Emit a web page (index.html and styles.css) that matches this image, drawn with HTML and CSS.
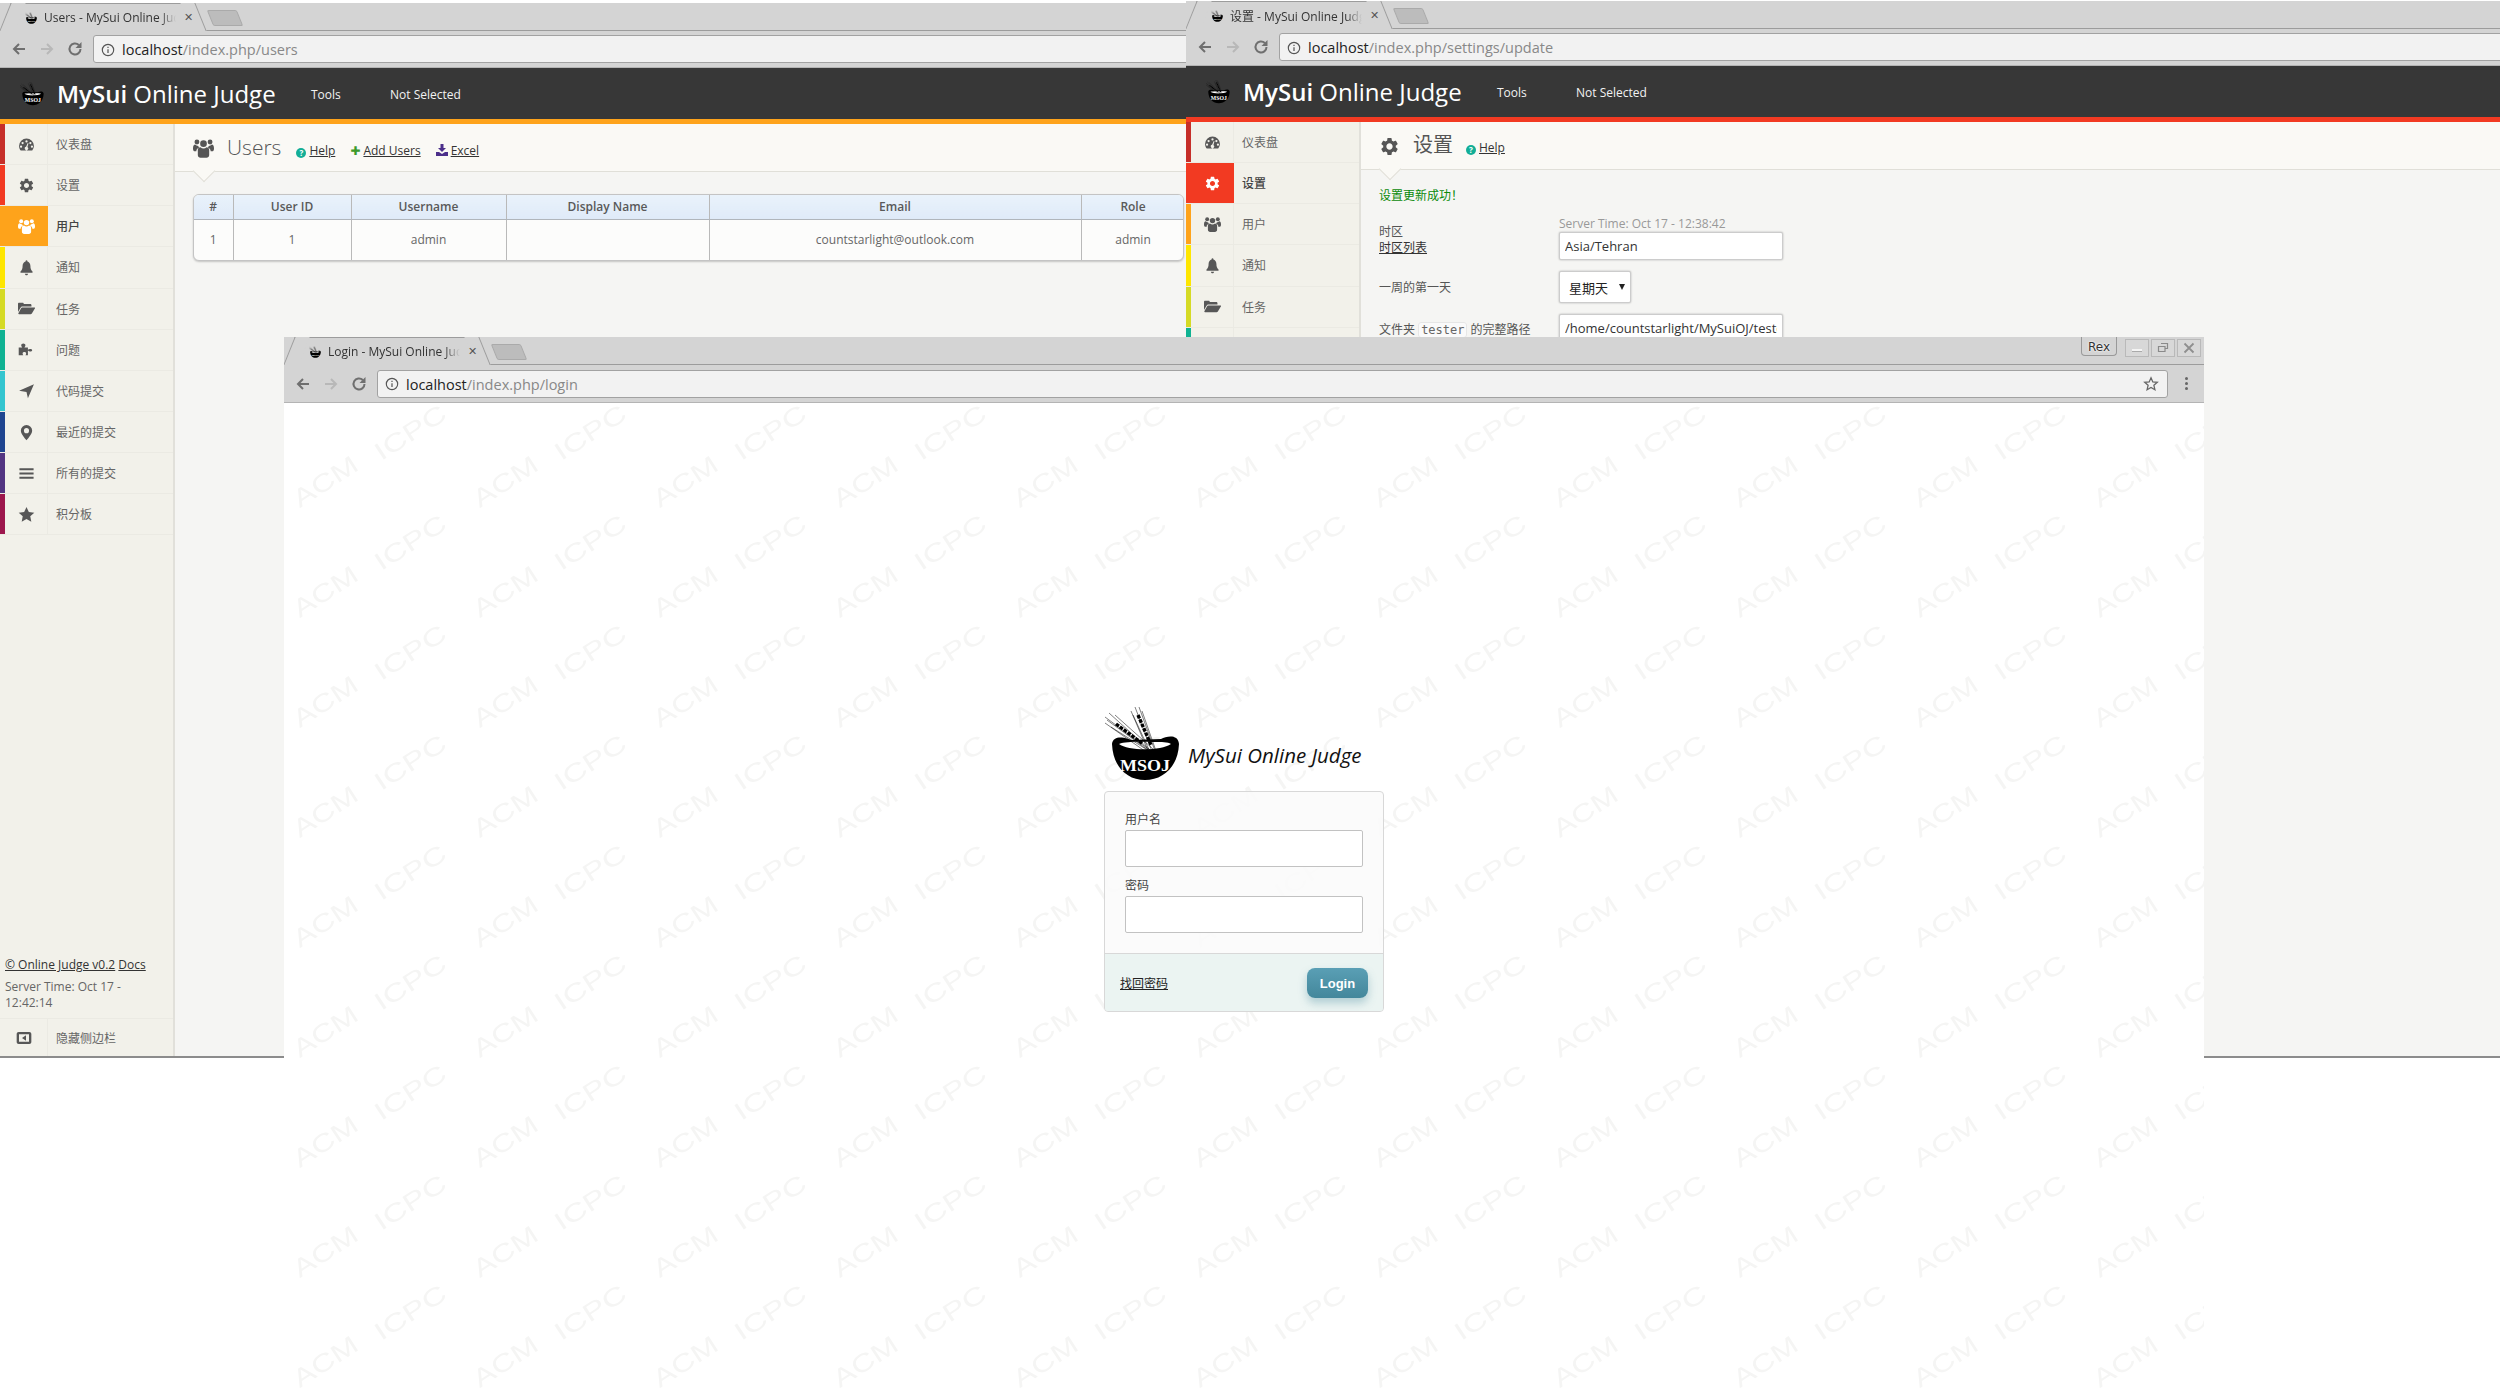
FILE: index.html
```html
<!DOCTYPE html>
<html lang="zh-CN">
<head>
    <meta charset="UTF-8">
    <meta name="viewport" content="width=device-width, initial-scale=1.0">
    <title>MySui Online Judge</title>
    <link rel="stylesheet" href="styles.css">
</head>
<body>
    <!-- shared icons -->
    <svg class="icon-defs" width="0" height="0">
        <symbol id="i-logo" viewBox="0 0 75 75">
            <path d="M7 37C8 27 22 31 26 33l30-1c6-3 17-5 18 5C73 60 58 73 40 73S8 60 7 37z" fill="#000"/>
            <path class="logo-lens" d="M14 37c9 7 42 7 52 0-3-2-10-2-16-2-12 0-28-1-36 2z"/>
            <g fill="none" stroke="#000" stroke-width="0.5">
                <path d="M0 10 50 47M4 6 46 44M0 16 44 47M10 8 48 42M2 13 47 46M6 20 44 44"/>
                <path d="M30 0 48 47M34 0 50 44M26 4 44 46M37 4 51 44M28 8 46 47"/>
            </g>
            <path d="M11 17 38 37" fill="none" stroke="#000" stroke-width="3.400" stroke-dasharray="3.600 1.200"/>
            <path d="M33 8 46 38" fill="none" stroke="#000" stroke-width="3.400" stroke-dasharray="3.600 1.200"/>
            <text x="40" y="64" text-anchor="middle" textLength="50" lengthAdjust="spacingAndGlyphs" font-family="Liberation Serif" font-weight="700" font-size="17" fill="#fff">MSOJ</text>
        </symbol>
        <symbol id="i-dash" viewBox="0 0 24 24">
            <path fill-rule="evenodd" d="M12 3.5A10.5 10.5 0 0 0 1.5 14c0 2.500.9 4.800 2.400 6.500h16.200A10.400 10.400 0 0 0 22.500 14 10.500 10.500 0 0 0 12 3.500zM12 6a1.600 1.600 0 1 1 0 3.200A1.600 1.600 0 0 1 12 6zM6.500 8.300a1.600 1.600 0 1 1 0 3.200 1.600 1.600 0 0 1 0-3.200zM17.500 8.300a1.600 1.600 0 1 1 0 3.200 1.600 1.600 0 0 1 0-3.200zM4.300 13.500a1.600 1.600 0 1 1 0 3.200 1.600 1.600 0 0 1 0-3.200zM19.700 13.500a1.600 1.600 0 1 1 0 3.200 1.600 1.600 0 0 1 0-3.200zM13.800 10l1 .4-1.500 5.200a2.400 2.400 0 1 1-1.900-.3z"/>
        </symbol>
        <symbol id="i-cog" viewBox="0 0 24 24">
            <path d="M19.140 12.940c.04-.3.06-.61.06-.94 0-.32-.02-.64-.07-.94l2.030-1.580a.49.49 0 0 0 .12-.61l-1.920-3.320a.488.488 0 0 0-.59-.22l-2.390.96c-.5-.38-1.030-.7-1.620-.94l-.36-2.540a.484.484 0 0 0-.48-.41h-3.840c-.24 0-.43.17-.47.41l-.36 2.540c-.59.24-1.130.57-1.620.94l-2.390-.96c-.22-.08-.47 0-.59.22L2.740 8.870c-.12.21-.08.47.12.61l2.030 1.580c-.05.3-.09.63-.09.94s.02.64.07.94l-2.030 1.580a.49.49 0 0 0-.12.61l1.920 3.320c.12.22.37.29.59.22l2.390-.96c.5.38 1.030.7 1.620.94l.36 2.540c.05.24.24.41.48.41h3.840c.24 0 .44-.17.47-.41l.36-2.540c.59-.24 1.130-.56 1.620-.94l2.390.96c.22.08.47 0 .59-.22l1.920-3.320c.12-.22.07-.47-.12-.61l-2.010-1.580zM12 15.600c-1.980 0-3.600-1.620-3.600-3.600s1.620-3.600 3.600-3.600 3.600 1.620 3.600 3.600-1.620 3.600-3.600 3.600z"/>
        </symbol>
        <symbol id="i-users" viewBox="0 0 24 24">
            <circle cx="12" cy="6.500" r="3.800"/>
            <circle cx="4.500" cy="4.500" r="2.800"/>
            <circle cx="19.500" cy="4.500" r="2.800"/>
            <path d="M5.500 13.500c0-2 1.500-3 3-3 1 1 2.200 1.500 3.500 1.500s2.500-.5 3.500-1.500c1.500 0 3 1 3 3v6c0 2-1.500 3-3 3h-7c-1.500 0-3-1-3-3z"/>
            <path d="M0 12c0-3 1-4.500 2.500-4.500C3.500 8.500 4.500 9 6 9c.3 1 .6 1.500 1 2-2 .5-3.200 2-3.200 4H1.500C.5 15 0 13.500 0 12zM24 12c0-3-1-4.500-2.500-4.500C20.500 8.500 19.500 9 18 9c-.3 1-.6 1.500-1 2 2 .5 3.200 2 3.200 4h2.300c1 0 1.500-1.500 1.500-3z"/>
        </symbol>
        <symbol id="i-bell" viewBox="0 0 24 24">
            <path d="M12 23c1.300 0 2.300-1 2.300-2.200H9.700C9.700 22 10.700 23 12 23zm8.500-5.500c-2-1.800-3-4-3-8 0-3-2-5.200-4.200-5.800V3a1.300 1.300 0 0 0-2.600 0v.7C8.500 4.300 6.500 6.500 6.500 9.500c0 4-1 6.200-3 8v2h17z"/>
        </symbol>
        <symbol id="i-folder" viewBox="0 0 24 24">
            <path d="M0 5.500C0 4.500.7 4 1.500 4h5c1 0 1.500.6 1.700 1.500h9c1 0 1.800.7 1.800 1.700V9H6.500C5 9 4.300 9.600 3.800 10.500L0 17z"/>
            <path d="M6 10.500h17c1 0 1.300.7.800 1.500l-3.800 6.500c-.4.8-1 1.500-2.200 1.500H1.500c-1 0-1.300-.7-.8-1.500l3.500-6.500c.4-.8 1-1.500 1.800-1.500z"/>
        </symbol>
        <symbol id="i-puzzle" viewBox="0 0 24 24">
            <path d="M1 9h5C5 8 4.500 7 4.500 6 4.500 4.500 6 3.500 7.500 3.500S10.500 4.500 10.500 6c0 1-.5 2-1.500 3h5v3.500c1-.8 1.700-1.300 3-1.300 1.800 0 3 .8 3 1.800s-1.200 1.800-3 1.800c-1.300 0-2-.5-3-1.300V20h-3.500c.5-.8 1-1.500 1-2.500 0-1.200-1-2-2.500-2s-2.500.8-2.500 2c0 1 .5 1.700 1 2.500H1z"/>
        </symbol>
        <symbol id="i-arrow" viewBox="0 0 24 24">
            <path d="M1.500 12.500 22.500 3l-8.500 20-2-9z"/>
        </symbol>
        <symbol id="i-pin" viewBox="0 0 24 24">
            <path fill-rule="evenodd" d="M12 1.500a8 8 0 0 0-8 8c0 5 8 13.500 8 13.500s8-8.500 8-13.500a8 8 0 0 0-8-8zm0 11.500a3.600 3.600 0 1 1 0-7.200 3.600 3.600 0 0 1 0 7.200z"/>
        </symbol>
        <symbol id="i-bars" viewBox="0 0 24 24">
            <path d="M2 4.500h20v3H2zM2 10.500h20v3H2zM2 16.500h20v3H2z"/>
        </symbol>
        <symbol id="i-star" viewBox="0 0 24 24">
            <path d="M12 1.500l3.300 7 7.700.9-5.700 5.200 1.500 7.600L12 18.400l-6.800 3.800 1.500-7.600L1 9.400l7.700-.9z"/>
        </symbol>
        <symbol id="i-collapse" viewBox="0 0 24 24">
            <path fill-rule="evenodd" d="M4 3h16c1.700 0 3 1.300 3 3v12c0 1.700-1.300 3-3 3H4c-1.700 0-3-1.300-3-3V6c0-1.700 1.300-3 3-3zm.5 3.500v11h15v-11zM15 8v8l-6-4z"/>
        </symbol>
    </svg>

    <div class="desktop">

        <!-- users window -->
        <section class="window win-users">
            <div class="tabstrip">
                <div class="tab">
                    <svg class="favicon"><use href="#i-logo"/></svg>
                    <span class="tab-title">Users - MySui Online Judge</span>
                    <span class="tab-close">✕</span>
                </div>
                <div class="new-tab"></div>
            </div>
            <div class="toolbar">
                <svg class="nav-btn" viewBox="0 0 16 16"><path d="M14 8H3M8 3 3 8l5 5" fill="none" stroke="#6f6f6f" stroke-width="2"/></svg>
                <svg class="nav-btn" viewBox="0 0 16 16"><path d="M2 8h11M8 3l5 5-5 5" fill="none" stroke="#b8b8b8" stroke-width="2"/></svg>
                <svg class="nav-btn" viewBox="0 0 16 16"><path d="M13.500 8A5.500 5.500 0 1 1 11.800 4" fill="none" stroke="#6f6f6f" stroke-width="2"/><path d="M14.500 1v6h-6z" fill="#6f6f6f"/></svg>
                <div class="address address-open">
                    <svg class="info" viewBox="0 0 16 16"><circle cx="8" cy="8" r="6.500" fill="none" stroke="#555" stroke-width="1.300"/><path d="M7.300 7h1.400v4.500H7.300zM7.300 4.300h1.400v1.400H7.300z" fill="#555"/></svg>
                    <span class="host">localhost</span><span class="path">/index.php/users</span>
                </div>
            </div>
            <header class="app-header">
                <svg class="app-logo"><use href="#i-logo"/></svg>
                <div class="app-title"><b>MySui</b> Online Judge</div>
                <a class="app-link link-tools">Tools</a>
                <a class="app-link">Not Selected</a>
            </header>
            <div class="accent accent-orange"></div>
            <div class="app-body">
                <aside class="sidebar">
                    <a class="nav-item c1"><span class="nav-icon"><svg><use href="#i-dash"/></svg></span><span class="nav-label">仪表盘</span></a>
                    <a class="nav-item c2"><span class="nav-icon"><svg><use href="#i-cog"/></svg></span><span class="nav-label">设置</span></a>
                    <a class="nav-item c3 active"><span class="nav-icon"><svg><use href="#i-users"/></svg></span><span class="nav-label">用户</span></a>
                    <a class="nav-item c4"><span class="nav-icon"><svg><use href="#i-bell"/></svg></span><span class="nav-label">通知</span></a>
                    <a class="nav-item c5"><span class="nav-icon"><svg><use href="#i-folder"/></svg></span><span class="nav-label">任务</span></a>
                    <a class="nav-item c6"><span class="nav-icon"><svg><use href="#i-puzzle"/></svg></span><span class="nav-label">问题</span></a>
                    <a class="nav-item c7"><span class="nav-icon"><svg><use href="#i-arrow"/></svg></span><span class="nav-label">代码提交</span></a>
                    <a class="nav-item c8"><span class="nav-icon"><svg><use href="#i-pin"/></svg></span><span class="nav-label">最近的提交</span></a>
                    <a class="nav-item c9"><span class="nav-icon"><svg><use href="#i-bars"/></svg></span><span class="nav-label">所有的提交</span></a>
                    <a class="nav-item c10"><span class="nav-icon"><svg><use href="#i-star"/></svg></span><span class="nav-label">积分板</span></a>
                    <div class="side-footer">
                        <p class="side-links"><a>© Online Judge v0.2</a> <a>Docs</a></p>
                        <p class="side-time">Server Time: Oct 17 - 12:42:14</p>
                    </div>
                    <a class="nav-item nav-hide"><span class="nav-icon"><svg><use href="#i-collapse"/></svg></span><span class="nav-label">隐藏侧边栏</span></a>
                </aside>
                <main class="content">
                    <div class="page-head">
                        <svg class="page-icon"><use href="#i-users"/></svg>
                        <h1>Users</h1>
                        <a class="head-link"><span class="help-dot">?</span><u>Help</u></a>
                        <a class="head-link"><span class="plus">✚</span><u>Add Users</u></a>
                        <a class="head-link"><svg class="dl-icon" viewBox="0 0 12 12"><path d="M4.500 0h3v4H10L6 8 2 4h2.500zM0 8h3l3 2 3-2h3v4H0z" fill="#4b2f8a"/></svg><u>Excel</u></a>
                    </div>
                    <div class="page-main">
                        <div class="table-wrap">
                            <table class="data-table">
                                <colgroup>
                                    <col class="col-num"><col class="col-id"><col class="col-user"><col class="col-name"><col class="col-mail"><col class="col-role">
                                </colgroup>
                                <thead>
                                    <tr><th>#</th><th>User ID</th><th>Username</th><th>Display Name</th><th>Email</th><th>Role</th></tr>
                                </thead>
                                <tbody>
                                    <tr><td>1</td><td>1</td><td>admin</td><td></td><td>countstarlight@outlook.com</td><td>admin</td></tr>
                                </tbody>
                            </table>
                        </div>
                    </div>
                </main>
            </div>
        </section>

        <!-- settings window -->
        <section class="window win-settings">
            <div class="tabstrip">
                <div class="tab">
                    <svg class="favicon"><use href="#i-logo"/></svg>
                    <span class="tab-title">设置 - MySui Online Judge</span>
                    <span class="tab-close">✕</span>
                </div>
                <div class="new-tab"></div>
            </div>
            <div class="toolbar">
                <svg class="nav-btn" viewBox="0 0 16 16"><path d="M14 8H3M8 3 3 8l5 5" fill="none" stroke="#6f6f6f" stroke-width="2"/></svg>
                <svg class="nav-btn" viewBox="0 0 16 16"><path d="M2 8h11M8 3l5 5-5 5" fill="none" stroke="#b8b8b8" stroke-width="2"/></svg>
                <svg class="nav-btn" viewBox="0 0 16 16"><path d="M13.500 8A5.500 5.500 0 1 1 11.800 4" fill="none" stroke="#6f6f6f" stroke-width="2"/><path d="M14.500 1v6h-6z" fill="#6f6f6f"/></svg>
                <div class="address address-open">
                    <svg class="info" viewBox="0 0 16 16"><circle cx="8" cy="8" r="6.500" fill="none" stroke="#555" stroke-width="1.300"/><path d="M7.300 7h1.400v4.500H7.300zM7.300 4.300h1.400v1.400H7.300z" fill="#555"/></svg>
                    <span class="host">localhost</span><span class="path">/index.php/settings/update</span>
                </div>
            </div>
            <header class="app-header">
                <svg class="app-logo"><use href="#i-logo"/></svg>
                <div class="app-title"><b>MySui</b> Online Judge</div>
                <a class="app-link link-tools">Tools</a>
                <a class="app-link">Not Selected</a>
            </header>
            <div class="accent accent-red"></div>
            <div class="app-body">
                <aside class="sidebar">
                    <a class="nav-item c1"><span class="nav-icon"><svg><use href="#i-dash"/></svg></span><span class="nav-label">仪表盘</span></a>
                    <a class="nav-item c2 active"><span class="nav-icon"><svg><use href="#i-cog"/></svg></span><span class="nav-label">设置</span></a>
                    <a class="nav-item c3"><span class="nav-icon"><svg><use href="#i-users"/></svg></span><span class="nav-label">用户</span></a>
                    <a class="nav-item c4"><span class="nav-icon"><svg><use href="#i-bell"/></svg></span><span class="nav-label">通知</span></a>
                    <a class="nav-item c5"><span class="nav-icon"><svg><use href="#i-folder"/></svg></span><span class="nav-label">任务</span></a>
                    <a class="nav-item c6"><span class="nav-icon"><svg><use href="#i-puzzle"/></svg></span><span class="nav-label">问题</span></a>
                </aside>
                <main class="content">
                    <div class="page-head">
                        <svg class="page-icon"><use href="#i-cog"/></svg>
                        <h1>设置</h1>
                        <a class="head-link"><span class="help-dot">?</span><u>Help</u></a>
                    </div>
                    <div class="page-main settings-main">
                        <p class="notice">设置更新成功！</p>
                        <form class="settings-form">
                            <div class="form-label"><span>时区</span><u>时区列表</u></div>
                            <div class="form-field">
                                <span class="server-time">Server Time: Oct 17 - 12:38:42</span>
                                <input class="text-input" type="text" value="Asia/Tehran">
                            </div>
                            <div class="form-label form-label-mid">一周的第一天</div>
                            <div class="form-field">
                                <div class="select-wrap"><select class="week-select"><option>星期天</option></select></div>
                            </div>
                            <div class="form-label form-label-path"><span>文件夹 <code>tester</code> 的完整路径</span></div>
                            <div class="form-field">
                                <input class="text-input" type="text" value="/home/countstarlight/MySuiOJ/tester/">
                            </div>
                        </form>
                    </div>
                </main>
            </div>
        </section>

        <!-- login window -->
        <section class="window win-login">
            <div class="tabstrip">
                <div class="tab">
                    <svg class="favicon"><use href="#i-logo"/></svg>
                    <span class="tab-title">Login - MySui Online Judge</span>
                    <span class="tab-close">✕</span>
                </div>
                <div class="new-tab"></div>
                <div class="win-controls">
                    <span class="profile">Rex</span>
                    <span class="win-btn"><svg viewBox="0 0 14 14"><path d="M2 9h10" stroke="#f4f4f4" stroke-width="2"/><path d="M2 10.500h10" stroke="#aaa"/></svg></span>
                    <span class="win-btn"><svg viewBox="0 0 14 14"><path d="M5 2.500h6.500v5H9M2.500 5.500H9v5H2.500z" fill="none" stroke="#8a8a8a" stroke-width="1.200"/></svg></span>
                    <span class="win-btn"><svg viewBox="0 0 14 14"><path d="M2.500 2.500l9 9M11.500 2.500l-9 9" stroke="#8f8f8f" stroke-width="1.800"/></svg></span>
                </div>
            </div>
            <div class="toolbar">
                <svg class="nav-btn" viewBox="0 0 16 16"><path d="M14 8H3M8 3 3 8l5 5" fill="none" stroke="#6f6f6f" stroke-width="2"/></svg>
                <svg class="nav-btn" viewBox="0 0 16 16"><path d="M2 8h11M8 3l5 5-5 5" fill="none" stroke="#b8b8b8" stroke-width="2"/></svg>
                <svg class="nav-btn" viewBox="0 0 16 16"><path d="M13.500 8A5.500 5.500 0 1 1 11.800 4" fill="none" stroke="#6f6f6f" stroke-width="2"/><path d="M14.500 1v6h-6z" fill="#6f6f6f"/></svg>
                <div class="address">
                    <svg class="info" viewBox="0 0 16 16"><circle cx="8" cy="8" r="6.500" fill="none" stroke="#555" stroke-width="1.300"/><path d="M7.300 7h1.400v4.500H7.300zM7.300 4.300h1.400v1.400H7.300z" fill="#555"/></svg>
                    <span class="host">localhost</span><span class="path">/index.php/login</span>
                    <svg class="bookmark" viewBox="0 0 16 16"><path d="M8 1.800l1.800 4.100 4.500.4-3.400 3 1 4.400L8 11.400l-3.900 2.300 1-4.400-3.400-3 4.500-.4z" fill="none" stroke="#666" stroke-width="1.300"/></svg>
                </div>
                <div class="menu-dots"><i></i><i></i><i></i></div>
            </div>
            <div class="login-page">
                <svg class="watermark">
                    <defs>
                        <pattern id="acm" width="180" height="110" patternUnits="userSpaceOnUse">
                            <g font-family="Liberation Sans" font-size="25" fill="#f5f5f4" text-anchor="middle">
                                <text transform="translate(41 78) rotate(-33)" y="9" textLength="72" lengthAdjust="spacingAndGlyphs">ACM</text>
                                <text transform="translate(126 29) rotate(-33)" y="9" textLength="80" lengthAdjust="spacingAndGlyphs">ICPC</text>
                            </g>
                        </pattern>
                    </defs>
                    <rect width="100%" height="100%" fill="url(#acm)"/>
                </svg>
                <div class="login-brand">
                    <svg class="login-logo"><use href="#i-logo"/></svg>
                    <span class="login-name">MySui Online Judge</span>
                </div>
                <form class="login-box">
                    <div class="login-fields">
                        <label class="login-label">用户名</label>
                        <input class="login-input" type="text">
                        <label class="login-label">密码</label>
                        <input class="login-input" type="password">
                    </div>
                    <div class="login-foot">
                        <a class="forgot">找回密码</a>
                        <button class="login-btn" type="button">Login</button>
                    </div>
                </form>
            </div>
        </section>
    </div>
</body>
</html>
```

FILE: styles.css
```css
* {
    box-sizing: border-box;
}
body {
    margin: 0;
    background-color: #fff;
    font-family: "Open Sans", "Noto Sans CJK SC", sans-serif;
    font-size: 12px;
    color: #666;
}
.icon-defs {
    position: absolute;
}
.logo-lens {
    fill: #fff;
}
.desktop {
    position: relative;
    width: 2500px;
    height: 1388px;
    overflow: hidden;
    background-color: #fff;
}

/* windows sit freely on the desktop */
.window {
    position: absolute;
    display: flex;
    flex-direction: column;
    overflow: hidden;
}
.win-users {
    left: 0;
    top: 3px;
    width: 1187px;
    height: 1055px;
    border-bottom: 2px solid #8c8c8c;
}
.win-settings {
    left: 1186px;
    top: 1px;
    width: 1314px;
    height: 1057px;
    border-bottom: 2px solid #8c8c8c;
}
.win-login {
    left: 284px;
    top: 337px;
    width: 1920px;
    height: 1051px;
    background-color: #fff;
}

/* browser chrome */
.tabstrip {
    display: flex;
    align-items: flex-start;
    flex: none;
    height: 28px;
    background-color: #d4d4d4;
    border-bottom: 1px solid #9c9c9c;
}
.tab {
    position: relative;
    display: flex;
    align-items: center;
    flex: none;
    width: 185px;
    height: 28px;
    margin-left: 10px;
    padding-left: 15px;
    background-color: #d4d4d4;
    border-top: 1px solid #9c9c9c;
    z-index: 1;
}
.tab::before,
.tab::after {
    content: "";
    position: absolute;
    top: -1px;
    width: 14px;
    height: 28px;
    background-color: #d4d4d4;
    z-index: -1;
}
.tab::before {
    left: -5px;
    border-left: 1px solid #9c9c9c;
    transform: skewX(-22deg);
}
.tab::after {
    right: -6px;
    border-right: 1px solid #9c9c9c;
    transform: skewX(22deg);
}
.favicon {
    flex: none;
    width: 12px;
    height: 12px;
}
.tab-title {
    width: 132px;
    margin-left: 7px;
    overflow: hidden;
    white-space: nowrap;
    color: #333;
    font-size: 12px;
    -webkit-mask-image: linear-gradient(to right, #000 88%, transparent);
    mask-image: linear-gradient(to right, #000 88%, transparent);
}
.tab-close {
    margin-left: 8px;
    color: #555;
    font-size: 11px;
    font-family: "DejaVu Sans", sans-serif;
}
.new-tab {
    flex: none;
    width: 30px;
    height: 16px;
    margin: 7px 0 0 15px;
    background-color: #bcbcbc;
    border: 1px solid #aaa;
    border-radius: 2px;
    transform: skewX(22deg);
}
.win-controls {
    display: flex;
    align-items: flex-start;
    gap: 2px;
    margin-left: auto;
    padding-right: 3px;
}
.profile {
    width: 36px;
    height: 19px;
    margin-right: 6px;
    padding-top: 1px;
    text-align: center;
    line-height: 18px;
    font-family: "DejaVu Sans", sans-serif;
    font-size: 12px;
    color: #333;
    text-shadow: 0 0 2px #fff, 0 0 2px #fff;
    border: 1px solid #999;
    border-top: none;
    border-radius: 0 0 4px 4px;
}
.win-btn {
    display: flex;
    align-items: center;
    justify-content: center;
    width: 24px;
    height: 18px;
    margin-top: 2px;
    background-color: #d8d8d8;
    border: 1px solid #b9b9b9;
}
.win-btn svg {
    width: 14px;
    height: 14px;
}
.toolbar {
    display: flex;
    align-items: center;
    flex: none;
    height: 37px;
    padding: 0 0 0 11px;
    background-color: #d4d4d4;
    border-bottom: 1px solid #b4b4b4;
}
.win-login .toolbar {
    height: 38px;
}
.nav-btn {
    flex: none;
    width: 16px;
    height: 16px;
    margin-right: 12px;
}
.address {
    display: flex;
    align-items: center;
    flex: 1;
    height: 28px;
    margin-left: -2px;
    padding: 1px 8px 0 7px;
    background-color: #f2f2f2;
    border: 1px solid #a2a2a2;
    border-radius: 3px;
    font-size: 14.500px;
}
.address-open {
    margin-right: -10px;
}
.info {
    flex: none;
    width: 14px;
    height: 14px;
    margin-right: 7px;
}
.host {
    color: #222;
}
.path {
    color: #888;
}
.bookmark {
    width: 16px;
    height: 16px;
    margin-left: auto;
}
.menu-dots {
    display: flex;
    flex-direction: column;
    align-items: center;
    gap: 2px;
    width: 36px;
}
.menu-dots i {
    width: 3px;
    height: 3px;
    border-radius: 50%;
    background-color: #666;
}

/* app shell */
.app-header {
    display: flex;
    align-items: center;
    flex: none;
    height: 51px;
    padding-left: 20px;
    background-color: #373737;
    color: #fff;
}
.app-header .app-logo {
    flex: none;
    width: 24px;
    height: 24px;
}
.app-title {
    flex: none;
    width: 254px;
    margin-left: 13px;
    font-size: 24px;
    white-space: nowrap;
    line-height: 1;
}
.app-title b {
    font-weight: 600;
}
.app-link {
    padding-top: 2px;
    font-size: 12px;
    color: #f2f2f2;
}
.link-tools {
    width: 79px;
}
.accent {
    flex: none;
    height: 5px;
}
.accent-orange {
    background-color: #fea31b;
}
.accent-red {
    background-color: #f23a22;
}
.app-body {
    display: flex;
    flex: 1;
    min-height: 0;
    background-color: #f5f5f3;
}

/* sidebar */
.sidebar {
    display: flex;
    flex-direction: column;
    flex: none;
    width: 175px;
    background-color: #f2f1ea;
    border-right: 2px solid #e1e0da;
}
.nav-item {
    display: flex;
    align-items: stretch;
    flex: none;
    height: 41.150px;
    border-bottom: 1px solid #ebeae3;
}
.nav-icon {
    display: flex;
    align-items: center;
    justify-content: center;
    flex: none;
    width: 48px;
    border-left: 5px solid var(--stripe);
    border-right: 1px solid #ebeae3;
}
.nav-icon svg {
    width: 17px;
    height: 17px;
    fill: #575757;
}
.nav-label {
    align-self: center;
    margin-left: 8px;
    font-size: 12px;
    color: #666;
}
.nav-item.active .nav-icon {
    background-color: var(--stripe);
    border-right-color: var(--stripe);
}
.nav-item.active .nav-icon svg {
    fill: #fff;
}
.nav-item.active .nav-label {
    color: #444;
    font-weight: 500;
}
.c1 { --stripe: #c62f29; }
.c2 { --stripe: #f23a22; }
.c3 { --stripe: #fea31b; }
.c4 { --stripe: #fee600; }
.c5 { --stripe: #d5da25; }
.c6 { --stripe: #0fb292; }
.c7 { --stripe: #34c5cf; }
.c8 { --stripe: #1f4590; }
.c9 { --stripe: #533582; }
.c10 { --stripe: #9d174d; }
.side-footer {
    margin-top: auto;
    padding: 0 5px 7px;
}
.side-footer p {
    margin: 0;
}
.side-links {
    color: #333;
    line-height: 18px;
}
.side-links a {
    text-decoration: underline;
}
.side-footer .side-time {
    width: 130px;
    margin-top: 5px;
    line-height: 16px;
    color: #666;
}
.nav-hide {
    --stripe: transparent;
    height: 38px;
    border-top: 1px solid #ebeae3;
    border-bottom: none;
}
.nav-hide .nav-icon {
    border-left-width: 0;
}
.nav-hide .nav-icon svg {
    width: 16px;
    height: 16px;
}

/* content */
.content {
    flex: 1;
    min-width: 0;
}
.page-head {
    position: relative;
    display: flex;
    align-items: baseline;
    height: 48px;
    padding: 8px 0 0 18px;
    background-color: #faf9f5;
    border-bottom: 1px solid #e0dfd8;
}
.page-head::after {
    content: "";
    position: absolute;
    left: 21px;
    bottom: -8px;
    width: 15px;
    height: 15px;
    background-color: #faf9f5;
    border-right: 1px solid #e0dfd8;
    border-bottom: 1px solid #e0dfd8;
    transform: rotate(45deg);
}
.page-icon {
    align-self: flex-start;
    width: 21px;
    height: 21px;
    margin-top: 6px;
    fill: #555;
}
.page-head h1 {
    margin: 0 15px 0 13px;
    font-size: 21px;
    font-weight: 300;
    line-height: 30px;
    color: #555;
}
.win-settings .page-head h1 {
    margin-right: 13px;
    font-size: 20px;
    font-weight: 400;
}
.head-link {
    margin-right: 15px;
    font-size: 12px;
    color: #333;
}
.help-dot {
    display: inline-block;
    width: 10px;
    height: 10px;
    margin-right: 3px;
    border-radius: 50%;
    background-color: #12ae97;
    color: #fff;
    font-size: 8px;
    font-weight: 700;
    line-height: 10px;
    text-align: center;
    vertical-align: -1px;
}
.plus {
    margin-right: 3px;
    font-family: "DejaVu Sans", sans-serif;
    color: #3c9a2a;
    font-size: 12px;
}
.dl-icon {
    width: 12px;
    height: 12px;
    margin-right: 3px;
    vertical-align: -1px;
}
.page-main {
    padding: 22px 0 0 18px;
}
.table-wrap {
    width: 991px;
    background-color: #fcfcfb;
    border: 1px solid #c4c4c4;
    border-radius: 6px;
    box-shadow: 0 1px 2px rgba(0, 0, 0, 0.2);
    overflow: hidden;
}
.data-table {
    width: 100%;
    table-layout: fixed;
    border-collapse: collapse;
    text-align: center;
}
.col-num { width: 39px; }
.col-id { width: 118px; }
.col-user { width: 155px; }
.col-name { width: 203px; }
.col-mail { width: 372px; }
.col-role { width: 104px; }
.data-table th {
    height: 24px;
    padding: 0;
    font-weight: 600;
    font-size: 12px;
    color: #595959;
    background: linear-gradient(#e9f2fb, #dfeaf8);
    border-right: 1px solid #b9b9b9;
    border-bottom: 1px solid #b0b5bb;
}
.data-table td {
    height: 41px;
    padding: 0;
    color: #666;
    border-right: 1px solid #b9b9b9;
}

/* settings form */
.settings-main {
    padding: 17px 0 0 18px;
}
.notice {
    margin: 0;
    line-height: 18px;
    color: #0a8a0a;
    font-size: 12px;
}
.settings-form {
    display: grid;
    grid-template-columns: 180px 224px;
    row-gap: 11px;
    margin-top: 10px;
}
.form-label {
    display: flex;
    flex-direction: column;
    justify-content: flex-end;
    padding-bottom: 4px;
    line-height: 16px;
    color: #555;
}
.form-label u {
    color: #333;
}
.form-label-mid {
    justify-content: center;
    padding: 2px 0 0;
}
.form-label-path {
    justify-content: center;
    padding: 4px 0 0;
}
.form-field {
    display: flex;
    flex-direction: column;
    align-items: flex-start;
}
.server-time {
    line-height: 17px;
    color: #999;
}
.text-input {
    width: 224px;
    height: 28px;
    padding: 0 5px;
    background-color: #fff;
    border: 1px solid #ccc;
    border-radius: 2px;
    box-shadow: 0 0 2px rgba(0, 0, 0, 0.3);
    font-family: "Open Sans", "Noto Sans CJK SC", sans-serif;
    font-size: 13px;
    color: #333;
}
.select-wrap {
    position: relative;
}
.select-wrap::after {
    content: "";
    position: absolute;
    right: 6px;
    top: 13px;
    border-left: 3px solid transparent;
    border-right: 3px solid transparent;
    border-top: 6px solid #222;
}
.week-select {
    display: block;
    width: 72px;
    height: 32px;
    padding: 0 9px;
    appearance: none;
    background-color: #fff;
    border: 1px solid #ccc;
    border-radius: 2px;
    box-shadow: 0 0 2px rgba(0, 0, 0, 0.3);
    font-family: "Noto Sans CJK SC", sans-serif;
    font-size: 13px;
    color: #222;
}
code {
    padding: 0 2px;
    background-color: #fafafa;
    border: 1px solid #e6e6e6;
    border-radius: 3px;
    font-family: "DejaVu Sans Mono", monospace;
    font-size: 12px;
    color: #666;
}

/* login */
.login-page {
    position: relative;
    display: flex;
    flex-direction: column;
    align-items: center;
    flex: 1;
    padding-top: 305px;
    background-color: #fff;
}
.watermark {
    position: absolute;
    left: 0;
    top: 0;
    width: 100%;
    height: 100%;
}
.login-brand {
    position: relative;
    display: flex;
    align-items: center;
    width: 280px;
    height: 83px;
    padding-bottom: 10px;
}
.login-logo {
    flex: none;
    width: 75px;
    height: 75px;
    margin-left: 1px;
}
.login-name {
    margin-left: 8px;
    margin-top: 21px;
    font-size: 20.500px;
    font-style: italic;
    color: #111;
    white-space: nowrap;
}
.login-box {
    position: relative;
    width: 280px;
    height: 221px;
    border: 1px solid #d8d8d8;
    border-radius: 4px;
    background-color: rgba(250, 250, 250, 0.85);
    overflow: hidden;
}
.login-fields {
    display: flex;
    flex-direction: column;
    height: 161px;
    padding: 18px 20px 0;
}
.login-label {
    line-height: 20px;
    color: #444;
    font-size: 12px;
}
.login-input {
    flex: none;
    width: 238px;
    height: 37px;
    margin-bottom: 9px;
    background-color: #fff;
    border: 1px solid #c2c2c2;
    border-radius: 2px;
}
.login-foot {
    display: flex;
    align-items: center;
    justify-content: space-between;
    height: 59px;
    padding: 0 15px;
    background-color: rgba(232, 242, 240, 0.85);
    border-top: 1px solid #d8d8d8;
}
.forgot {
    color: #222;
    text-decoration: underline;
    font-size: 12px;
}
.login-btn {
    width: 61px;
    height: 30px;
    padding: 0;
    background: linear-gradient(#5a9fb5, #43879b);
    border: none;
    border-radius: 8px;
    box-shadow: 0 5px 8px rgba(67, 135, 155, 0.35);
    color: #fff;
    font-family: "Liberation Sans", Arial, sans-serif;
    font-size: 13px;
    font-weight: 700;
}
```
